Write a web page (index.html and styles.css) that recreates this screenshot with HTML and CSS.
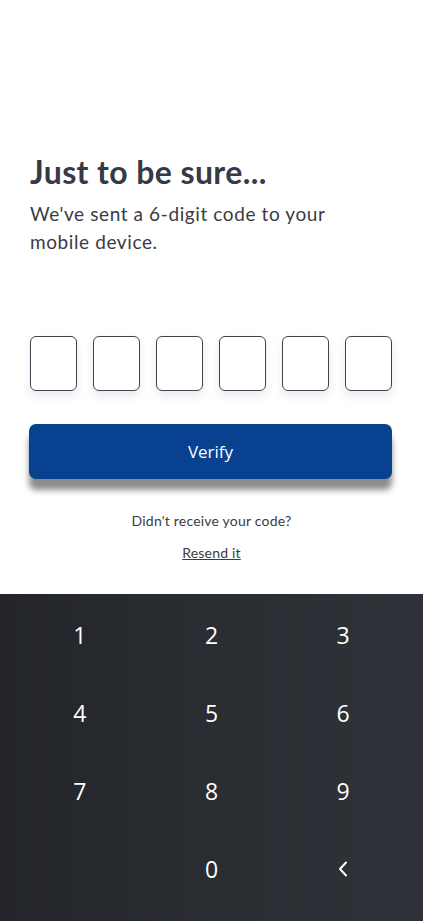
FILE: index.html
```html
<!DOCTYPE html>
<html lang="en">
  <head>
    <meta charset="UTF-8">
    <meta name="viewport" content="width=device-width, initial-scale=1.0">
    <title>Verify</title>
    <link rel="stylesheet" href="styles.css">
  </head>
  <body>
    <div id="screen">
      <div id="verify-pane">
        <h1>Just to be sure...</h1>
        <p class="intro">We've sent a 6-digit code to your mobile device.</p>

        <div id="code-boxes">
          <div class="code-box"></div>
          <div class="code-box"></div>
          <div class="code-box"></div>
          <div class="code-box"></div>
          <div class="code-box"></div>
          <div class="code-box"></div>
        </div>

        <button id="verify">Verify</button>

        <p class="hint">Didn't receive your code?</p>
        <p class="hint resend"><a href="#">Resend it</a></p>
      </div> <!-- verify-pane -->

      <div id="keypad">
        <div class="key">1</div>
        <div class="key">2</div>
        <div class="key">3</div>
        <div class="key">4</div>
        <div class="key">5</div>
        <div class="key">6</div>
        <div class="key">7</div>
        <div class="key">8</div>
        <div class="key">9</div>
        <div class="key"></div>
        <div class="key">0</div>
        <div class="key">
          <svg width="10" height="16" viewBox="0 0 10 16">
            <path d="M8 1.5 L2 8 L8 14.5" fill="none" stroke="#fff" stroke-width="2" stroke-linecap="round" stroke-linejoin="round"/>
          </svg>
        </div>
      </div> <!-- keypad -->
    </div>
  </body>
</html>
```

FILE: styles.css
```css
      body {
          margin: 0;
          background: #fff;
          font-family: Lato, "Open Sans", sans-serif;
      }
      #screen {
          width: 423px;
          height: 921px;
          display: flex;
          flex-direction: column;
      }
      #verify-pane {
          flex: 1;
          padding: 0 30px 0 30px;
      }
      h1 {
          margin: 150px 0 0 0;
          font-size: 32px;
          font-weight: 700;
          color: #363946;
          line-height: 44px;
          letter-spacing: 0.4px;
      }
      .intro {
          margin: 6px 0 0 0;
          font-size: 19px;
          line-height: 28px;
          color: #393b45;
          letter-spacing: 0.6px;
          width: 330px;
      }
      #code-boxes {
          display: flex;
          gap: 16px;
          margin-top: 80px;
      }
      .code-box {
          width: 45px;
          height: 53px;
          border: 1px solid #40424d;
          border-radius: 6px;
          box-shadow: 0 5px 10px rgba(60, 70, 110, 0.12);
      }
      button {
          display: block;
          width: 363px;
          height: 55px;
          margin: 33px 0 0 -1px;
          background-color: #07418f;
          color: #fff;
          border: none;
          border-radius: 7px;
          font-family: "Open Sans", sans-serif;
          font-size: 17px;
          font-weight: 500;
          box-shadow: 0 11px 6px rgba(0, 0, 0, 0.45);
          cursor: pointer;
      }
      .hint {
          margin: 33px 0 0 0;
          text-align: center;
          font-size: 14px;
          line-height: 18px;
          color: #3a3c44;
          letter-spacing: 0.2px;
      }
      .resend {
          margin-top: 14px;
      }
      .hint a {
          color: #3a3c44;
          text-decoration: underline;
      }
      #keypad {
          height: 327px;
          box-sizing: border-box;
          padding: 2px 14px 13px 14px;
          display: grid;
          grid-template-columns: repeat(3, 1fr);
          grid-template-rows: repeat(4, 78px);
          background: linear-gradient(90deg, #23252a 0%, #2a2d32 50%, #2f3238 100%);
      }
      .key {
          display: flex;
          align-items: center;
          justify-content: center;
          color: #fff;
          font-size: 23px;
          font-family: "Open Sans", sans-serif;
      }
```
